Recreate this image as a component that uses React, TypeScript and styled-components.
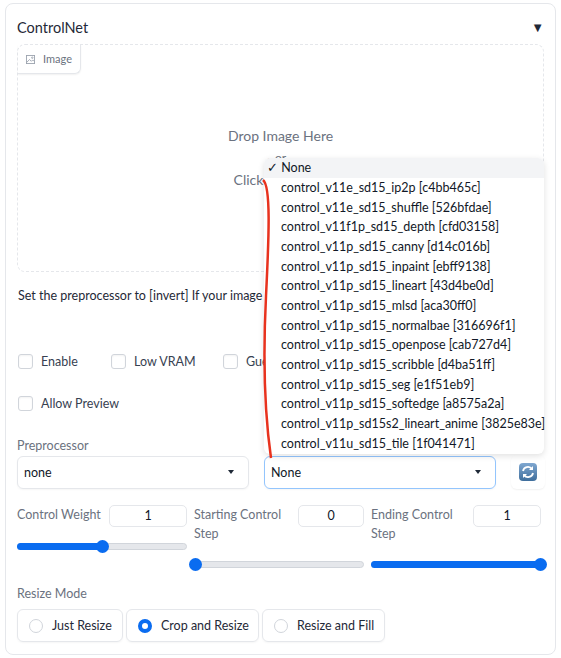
import styled, { createGlobalStyle } from 'styled-components';

const Global = createGlobalStyle`
  body { margin: 0; background: #fff; font-family: "Lato", "Noto Sans", sans-serif; color: #1f2937; }
  * { box-sizing: border-box; }
`;

const Panel = styled.div`
  margin: 3px 5px 0 5px;
  height: 652px;
  border: 1px solid #e5e7eb;
  border-radius: 8px;
  padding: 12px 11px 0 11px;
  position: relative;
`;

const TitleRow = styled.div`
  display: flex;
  justify-content: space-between;
  align-items: center;
  font-size: 14.5px;
  height: 22px;
  margin-bottom: 6px;
`;

const Tri = styled.span`
  font-size: 13px;
  color: #1f2937;
`;

const Drop = styled.div`
  height: 228px;
  border: 1px dashed #e5e7eb;
  border-radius: 8px;
  position: relative;
  display: flex;
  flex-direction: column;
  align-items: center;
  justify-content: center;
  color: #6b7280;
  font-size: 14px;
  line-height: 22px;
`;

const Tag = styled.div`
  position: absolute;
  top: 0;
  left: 0;
  display: flex;
  align-items: center;
  gap: 8px;
  padding: 3px 8px 3px 8px;
  font-size: 11px;
  color: #6b7280;
  border: 1px solid #e5e7eb;
  border-top: none;
  border-left: none;
  border-radius: 0 0 6px 0;
  box-shadow: 0 1px 2px rgba(0,0,0,0.06);
`;

const Hint = styled.p`
  margin: 14px 1px 0;
  font-size: 12.5px;
  line-height: 20px;
  color: #1f2937;
`;

const CheckRow = styled.div<{ $top: number }>`
  display: flex;
  margin-top: ${p => p.$top}px;
  height: 18px;
  align-items: center;
`;

const CheckItem = styled.label<{ $w: number }>`
  display: flex;
  align-items: center;
  gap: 8px;
  width: ${p => p.$w}px;
  font-size: 12.5px;
  color: #374151;
`;

const Box = styled.span`
  width: 15px;
  height: 15px;
  border: 1px solid #d1d5db;
  border-radius: 3px;
  box-shadow: inset 0 1px 2px rgba(0,0,0,0.05);
  margin-left: 1px;
`;

const Label = styled.div<{ $top: number }>`
  font-size: 12.5px;
  color: #6b7280;
  margin-top: ${p => p.$top}px;
`;

const SelRow = styled.div`
  display: grid;
  grid-template-columns: 232px 232px 34px;
  gap: 15px;
  margin-top: 2px;
  align-items: center;
`;

const Select = styled.div<{ $focus?: boolean }>`
  height: 33px;
  border: 1px solid ${p => (p.$focus ? '#93c5fd' : '#e5e7eb')};
  border-radius: 6px;
  display: flex;
  align-items: center;
  justify-content: space-between;
  padding: 0 14px 0 6px;
  font-size: 12.5px;
  color: #111827;
  box-shadow: 0 1px 2px rgba(0,0,0,0.04);
  position: relative;
`;

const Caret = styled.span`
  width: 0;
  height: 0;
  border-left: 3px solid transparent;
  border-right: 3px solid transparent;
  border-top: 4px solid #1f2937;
`;

const Refresh = styled.div`
  width: 34px;
  height: 34px;
  border-radius: 6px;
  box-shadow: 0 1px 2px rgba(0,0,0,0.06);
  display: flex;
  align-items: center;
  justify-content: center;
`;

const Menu = styled.div`
  position: absolute;
  left: -1px;
  bottom: 34px;
  width: 280px;
  background: #fff;
  border-radius: 6px;
  box-shadow: 0 2px 6px rgba(0,0,0,0.12);
  font-size: 12.5px;
  color: #111827;
  z-index: 5;
`;

const Opt = styled.div<{ $sel?: boolean }>`
  height: 19.7px;
  line-height: 19.7px;
  padding-left: ${p => (p.$sel ? 3 : 17)}px;
  background: ${p => (p.$sel ? '#f3f4f6' : 'transparent')};
  white-space: nowrap;
  border-radius: ${p => (p.$sel ? '6px 6px 0 0' : '0')};
`;

const Sliders = styled.div`
  display: grid;
  grid-template-columns: 170px 170px 170px;
  gap: 7px;
  margin-top: 16px;
`;

const SliderHead = styled.div`
  display: flex;
  justify-content: space-between;
  align-items: flex-start;
  height: 38px;
  font-size: 12.5px;
  line-height: 19px;
  color: #6b7280;
`;

const NumBox = styled.div<{ $w: number }>`
  width: ${p => p.$w}px;
  height: 22px;
  border: 1px solid #e5e7eb;
  border-radius: 5px;
  text-align: center;
  line-height: 20px;
  font-size: 12.5px;
  color: #111827;
  flex-shrink: 0;
`;

const Track = styled.div<{ $top: number }>`
  height: 7px;
  border-radius: 4px;
  border: 1px solid #d1d5db;
  background: #e5e7eb;
  position: relative;
  margin-top: ${p => p.$top}px;
`;

const Fill = styled.div`
  position: absolute;
  left: -1px;
  top: -1px;
  bottom: -1px;
  background: #0a6cf0;
  border-radius: 4px;
`;

const Knob = styled.div`
  position: absolute;
  top: 50%;
  width: 13px;
  height: 13px;
  margin: -6.5px 0 0 -6.5px;
  border-radius: 50%;
  background: #0a6cf0;
`;

const Radios = styled.div`
  display: flex;
  gap: 3px;
  margin-top: 8px;
`;

const Radio = styled.div<{ $w: number }>`
  width: ${p => p.$w}px;
  height: 33px;
  border: 1px solid #e5e7eb;
  border-radius: 6px;
  display: flex;
  align-items: center;
  gap: 9px;
  padding-left: 11px;
  font-size: 12.5px;
  color: #1f2937;
  box-shadow: 0 1px 2px rgba(0,0,0,0.04);
`;

const Dot = styled.span<{ $on?: boolean }>`
  width: 14px;
  height: 14px;
  border-radius: 50%;
  border: ${p => (p.$on ? '4px solid #0a6cf0' : '1px solid #d1d5db')};
  background: #fff;
`;

const RedLine = styled.svg`
  position: absolute;
  left: 245px;
  top: 172px;
  pointer-events: none;
  z-index: 6;
`;

const models = [
  'control_v11e_sd15_ip2p [c4bb465c]',
  'control_v11e_sd15_shuffle [526bfdae]',
  'control_v11f1p_sd15_depth [cfd03158]',
  'control_v11p_sd15_canny [d14c016b]',
  'control_v11p_sd15_inpaint [ebff9138]',
  'control_v11p_sd15_lineart [43d4be0d]',
  'control_v11p_sd15_mlsd [aca30ff0]',
  'control_v11p_sd15_normalbae [316696f1]',
  'control_v11p_sd15_openpose [cab727d4]',
  'control_v11p_sd15_scribble [d4ba51ff]',
  'control_v11p_sd15_seg [e1f51eb9]',
  'control_v11p_sd15_softedge [a8575a2a]',
  'control_v11p_sd15s2_lineart_anime [3825e83e]',
  'control_v11u_sd15_tile [1f041471]',
];

const Slider = ({ label, value, w, pct, top }: { label: string; value: string; w: number; pct: number; top: number }) => (
  <div>
    <SliderHead>
      <span>{label}</span>
      <NumBox $w={w}>{value}</NumBox>
    </SliderHead>
    <Track $top={top}>
      <Fill style={{ width: `${pct}%` }} />
      <Knob style={{ left: `${pct}%` }} />
    </Track>
  </div>
);

export default function App() {
  return (
    <>
      <Global />
      <Panel>
        <TitleRow>
          <span>ControlNet</span>
          <Tri>▼</Tri>
        </TitleRow>
        <Drop>
          <Tag>
            <svg width="9" height="9" viewBox="0 0 10 10" fill="none" stroke="#9ca3af" strokeWidth="1">
              <rect x="0.5" y="0.5" width="9" height="9" />
              <path d="M1 8l3-3 2 2 1.5-1.5L9 7" />
              <circle cx="7" cy="3" r="0.8" />
            </svg>
            Image
          </Tag>
          <div>Drop Image Here</div>
          <div style={{ fontSize: 12 }}>- or -</div>
          <div>Click to Upload</div>
        </Drop>
        <Hint>
          Set the preprocessor to [invert] If your image has white background and black lines.
        </Hint>
        <CheckRow $top={46}>
          <CheckItem $w={93}><Box />Enable</CheckItem>
          <CheckItem $w={112}><Box />Low VRAM</CheckItem>
          <CheckItem $w={120}><Box />Guess Mode</CheckItem>
        </CheckRow>
        <CheckRow $top={24}>
          <CheckItem $w={150}><Box />Allow Preview</CheckItem>
        </CheckRow>
        <Label $top={26}>Preprocessor</Label>
        <SelRow>
          <Select>none<Caret /></Select>
          <Select $focus>
            None<Caret />
            <Menu>
              <Opt $sel>✓ None</Opt>
              {models.map(m => <Opt key={m}>{m}</Opt>)}
            </Menu>
          </Select>
          <Refresh>
            <svg width="20" height="20" viewBox="0 0 20 20">
              <defs>
                <linearGradient id="rg" x1="0" y1="0" x2="0" y2="1">
                  <stop offset="0" stopColor="#7fa7d0" />
                  <stop offset="1" stopColor="#3f6e9c" />
                </linearGradient>
              </defs>
              <rect x="1" y="1" width="18" height="18" rx="4" fill="url(#rg)" />
              <path d="M5 9a5 5 0 0 1 9-2" stroke="#fff" strokeWidth="1.8" fill="none" />
              <path d="M15 4v4h-4z" fill="#fff" />
              <path d="M15 11a5 5 0 0 1-9 2" stroke="#fff" strokeWidth="1.8" fill="none" />
              <path d="M5 16v-4h4z" fill="#fff" />
            </svg>
          </Refresh>
        </SelRow>
        <Sliders>
          <Slider label="Control Weight" value="1" w={78} pct={50} top={0} />
          <Slider label="Starting Control Step" value="0" w={66} pct={0} top={18} />
          <Slider label="Ending Control Step" value="1" w={68} pct={100} top={18} />
        </Sliders>
        <Label $top={18}>Resize Mode</Label>
        <Radios>
          <Radio $w={106}><Dot />Just Resize</Radio>
          <Radio $w={133}><Dot $on />Crop and Resize</Radio>
          <Radio $w={123}><Dot />Resize and Fill</Radio>
        </Radios>
        <RedLine width="30" height="290" viewBox="0 0 30 290">
          <path d="M12 4 C 20 10, 18 60, 15 120 S 14 240, 20 282" stroke="#e8321e" strokeWidth="2.5" fill="none" />
        </RedLine>
      </Panel>
    </>
  );
}
